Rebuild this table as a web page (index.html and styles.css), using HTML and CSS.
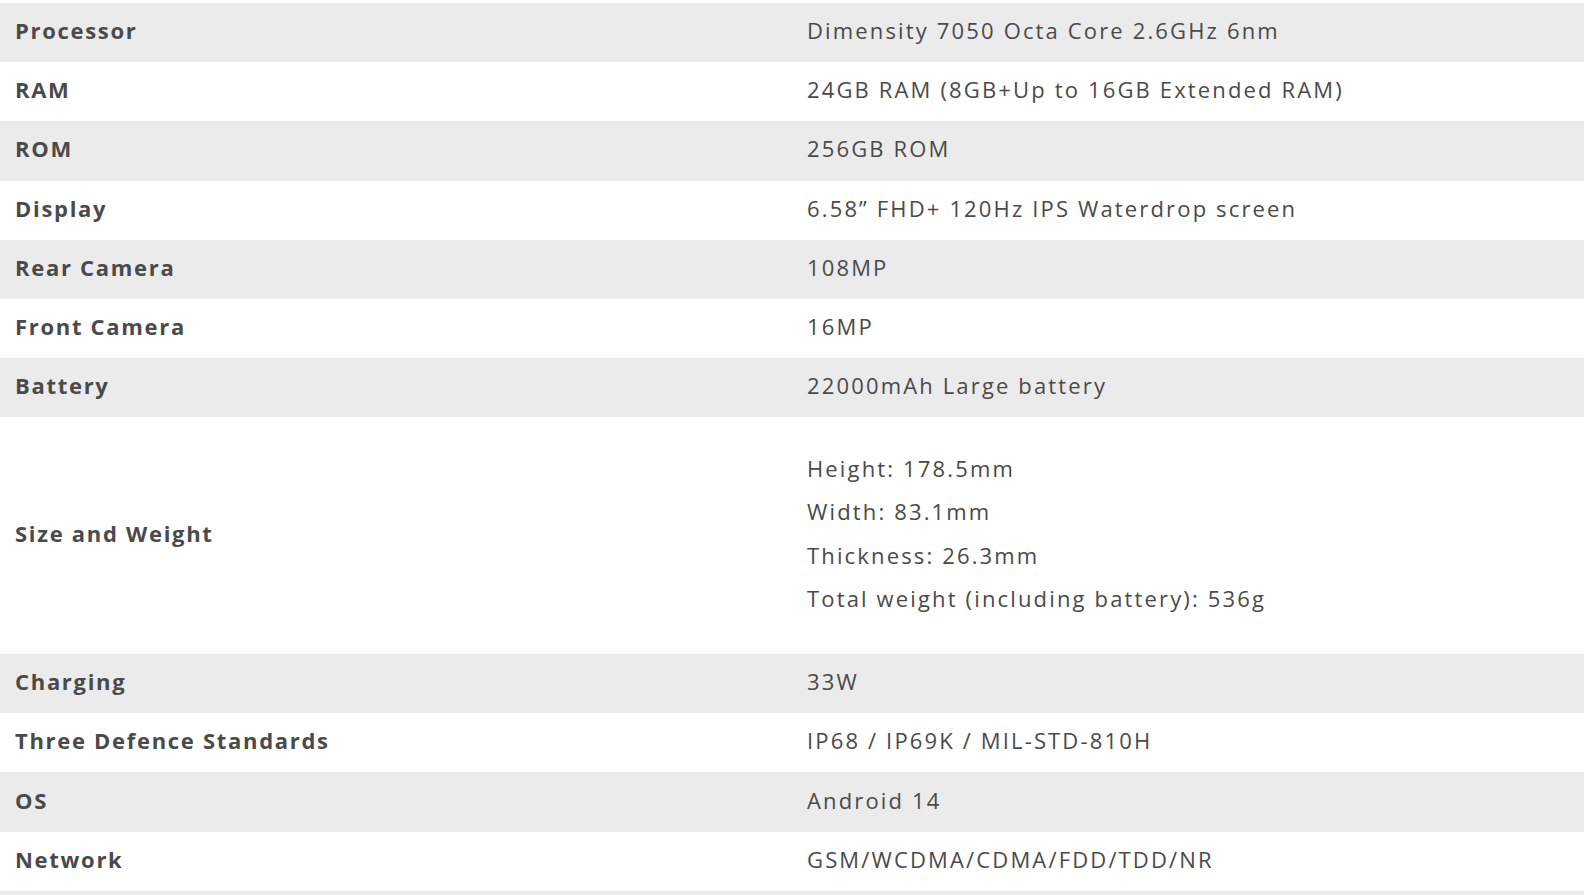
FILE: index.html
```html
<!DOCTYPE html>
<html lang="en">
<head>
<meta charset="utf-8">
<title>Specifications</title>
<link rel="stylesheet" href="styles.css">
</head>
<body>
<div class="page">
  <table class="specs">
    <tbody>
      <tr><th>Processor</th><td>Dimensity 7050 Octa Core 2.6GHz 6nm</td></tr>
      <tr><th>RAM</th><td>24GB RAM (8GB+Up to 16GB Extended RAM)</td></tr>
      <tr><th>ROM</th><td>256GB ROM</td></tr>
      <tr><th>Display</th><td>6.58” FHD+ 120Hz IPS Waterdrop screen</td></tr>
      <tr><th>Rear Camera</th><td>108MP</td></tr>
      <tr><th>Front Camera</th><td>16MP</td></tr>
      <tr><th>Battery</th><td>22000mAh Large battery</td></tr>
      <tr class="tall"><th>Size and Weight</th><td>
        <p>Height: 178.5mm</p>
        <p>Width: 83.1mm</p>
        <p>Thickness: 26.3mm</p>
        <p>Total weight (including battery): 536g</p>
      </td></tr>
      <tr><th>Charging</th><td>33W</td></tr>
      <tr><th>Three Defence Standards</th><td>IP68 / IP69K / MIL-STD-810H</td></tr>
      <tr><th>OS</th><td>Android 14</td></tr>
      <tr><th>Network</th><td>GSM/WCDMA/CDMA/FDD/TDD/NR</td></tr>
      <tr><th>&nbsp;</th><td>&nbsp;</td></tr>
    </tbody>
  </table>
</div>
</body>
</html>
```
FILE: styles.css
```css
html, body {
  margin: 0;
  padding: 0;
  background: #ffffff;
}

.page {
  padding: 3px 2px 0 0;
}

.specs {
  width: 100%;
  border-collapse: collapse;
  table-layout: fixed;
  font-family: "Open Sans", "Noto Sans", sans-serif;
  font-size: 22px;
  color: #4a4a4a;
}

.specs tr:nth-child(odd) {
  background: #ebebeb;
}

.specs th,
.specs td {
  width: 50%;
  height: 59.2px;
  box-sizing: border-box;
  padding: 0 15px 4px;
  line-height: 33px;
  text-align: left;
  vertical-align: middle;
}

.specs th {
  font-weight: 700;
  letter-spacing: 1.7px;
}

.specs td {
  font-weight: 400;
  letter-spacing: 2.15px;
}

.specs .tall th,
.specs .tall td {
  height: 236.8px;
}

.specs .tall td {
  padding-top: 0;
}

.specs p {
  margin: 0;
  line-height: 43.5px;
}
```
